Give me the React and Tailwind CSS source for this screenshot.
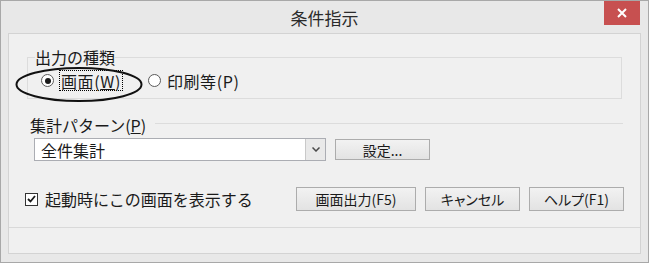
import React from 'react';

const FONT = "font-['Noto_Sans_CJK_JP','Liberation_Sans',sans-serif]";

const Radio = ({ checked }) => (
  <span className="w-[13px] h-[13px] rounded-full border border-[#5a5a5a] bg-white flex items-center justify-center shrink-0">
    {checked && <span className="w-[6px] h-[6px] rounded-full bg-[#1a1a1a]"></span>}
  </span>
);

const Button = ({ children, w }) => (
  <button
    className={`${w} h-[24px] border border-[#acacac] bg-gradient-to-b from-[#f2f2f2] to-[#e3e3e3] text-[14px] leading-none text-[#1a1a1a] [font-feature-settings:'palt'] flex items-center justify-center`}
  >
    {children}
  </button>
);

export default function App() {
  return (
    <div className={`${FONT} relative w-[649px] h-[263px] border border-[#a8a8a8] bg-[#e8e8e8] text-[#1a1a1a] flex flex-col`}>
      <div className="h-[32px] pt-[1px] flex items-center justify-center text-[17px] text-[#2b2b2b]">条件指示</div>
      <button className="absolute top-0 right-[8px] w-[36px] h-[24px] bg-[#c75050] flex items-center justify-center">
        <svg width="10" height="10" viewBox="0 0 10 10">
          <path d="M1 1L9 9M9 1L1 9" stroke="white" strokeWidth="2" />
        </svg>
      </button>

      <div className="mx-[7px] h-[221px] border border-[#d3d3d3] bg-[#f0f0f0] flex flex-col text-[16px] leading-[20px]">
        <fieldset className="mt-[14px] ml-[18px] w-[595px] h-[51px] border border-[#dcdcdc] px-0 pb-0 m-0">
          <legend className="px-0 ml-[7px] leading-[18px]">出力の種類</legend>
          <div className="flex items-center mt-[4px] pl-[13px]">
            <Radio checked />
            <span className="ml-[5px] border border-dotted border-black px-[1px] h-[21px] flex items-center tracking-[0.6px]">
              画面(<span className="underline">W</span>)
            </span>
            <span className="ml-[25px]"><Radio /></span>
            <span className="ml-[6px] tracking-[0.6px]">印刷等(P)</span>
          </div>
        </fieldset>

        <div className="mt-[16px] ml-[21px] mr-[17px] flex items-center">
          <span>
            集計パターン(<span className="underline">P</span>)
          </span>
          <span className="flex-1 h-px bg-[#dcdcdc] ml-[9px] -mt-[3px]"></span>
        </div>

        <div className="mt-[3px] ml-[25px] flex items-center">
          <div className="w-[292px] h-[23px] border border-[#abadb3] bg-white flex items-center">
            <span className="flex-1 pl-[6px]">全件集計</span>
            <span className="w-[20px] h-[21px] border-l border-[#c9c9c9] bg-[#e9e9e9] flex items-center justify-center">
              <svg width="8" height="5" viewBox="0 0 8 5">
                <path d="M0.5 0.5L4 4L7.5 0.5" stroke="#4a4a4a" strokeWidth="1.5" fill="none" />
              </svg>
            </span>
          </div>
          <button className="ml-[9px] w-[95px] h-[21px] border border-[#acacac] bg-gradient-to-b from-[#f2f2f2] to-[#e3e3e3] text-[14px] leading-none flex items-center justify-center">
            設定...
          </button>
        </div>

        <div className="mt-[26px] ml-[16px] mr-[16px] flex items-center">
          <span className="w-[13px] h-[13px] border border-[#333] bg-white flex items-center justify-center">
            <svg width="9" height="8" viewBox="0 0 9 8">
              <path d="M1 4L3.5 6.5L8 1" stroke="#1a1a1a" strokeWidth="1.8" fill="none" />
            </svg>
          </span>
          <span className="ml-[7px] flex-1">起動時にこの画面を表示する</span>
          <div className="flex gap-[9px]">
            <Button w="w-[120px]">画面出力(F5)</Button>
            <Button w="w-[95px]">キャンセル</Button>
            <Button w="w-[95px]">ヘルプ(F1)</Button>
          </div>
        </div>

        <div className="mt-[16px] h-px bg-[#d9d9d9]"></div>
      </div>

      <svg className="absolute left-[14px] top-[65px] pointer-events-none" width="130" height="37" viewBox="0 0 130 37">
        <ellipse cx="64" cy="18.5" rx="62.5" ry="16.5" fill="none" stroke="#111" strokeWidth="2" />
      </svg>
    </div>
  );
}
